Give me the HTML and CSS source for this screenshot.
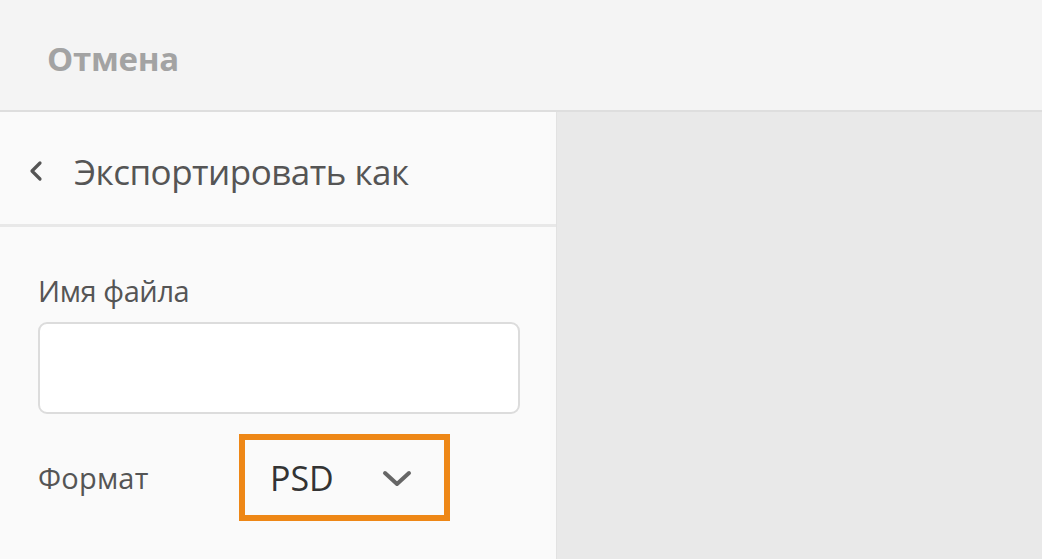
FILE: index.html
```html
<!DOCTYPE html>
<html lang="ru">
<head>
<meta charset="utf-8">
<link rel="stylesheet" href="styles.css">
</head>
<body>
<header class="topbar">
  <span class="cancel">Отмена</span>
</header>
<main class="main">
  <section class="panel">
    <div class="panel-head">
      <svg class="back" width="16" height="22" viewBox="0 0 16 22"><path d="M12 3 L4 11 L12 19" fill="none" stroke="#555" stroke-width="3.2" stroke-linecap="round" stroke-linejoin="round"/></svg>
      <span class="title">Экспортировать как</span>
    </div>
    <div class="panel-body">
      <label class="label">Имя файла</label>
      <div class="input"></div>
      <div class="format-row">
        <span class="label fmt">Формат</span>
        <div class="select">
          <span class="select-value">PSD</span>
          <svg class="chev" width="30" height="18" viewBox="0 0 30 18"><path d="M3 3 L15 14 L27 3" fill="none" stroke="#666" stroke-width="4" stroke-linecap="round" stroke-linejoin="round"/></svg>
        </div>
      </div>
    </div>
  </section>
  <section class="canvas"></section>
</main>
</body>
</html>
```

FILE: styles.css
```css
* { box-sizing: border-box; }
html, body { margin: 0; padding: 0; }
body {
  width: 1042px;
  height: 559px;
  overflow: hidden;
  font-family: "Open Sans", "Noto Sans", sans-serif;
  background: #f4f4f4;
  display: flex;
  flex-direction: column;
}
.topbar {
  height: 112px;
  flex: none;
  background: #f4f4f4;
  border-bottom: 2px solid #dedede;
  display: flex;
  align-items: center;
  padding-left: 47px;
  padding-top: 6px;
}
.cancel {
  font-size: 33px;
  font-weight: 700;
  color: #a3a3a3;
  letter-spacing: -0.3px;
}
.main {
  flex: 1;
  display: flex;
}
.panel {
  width: 557px;
  flex: none;
  background: #fafafa;
  border-right: 1px solid #e2e2e2;
  display: flex;
  flex-direction: column;
}
.panel-head {
  height: 115px;
  border-bottom: 3px solid #e8e8e8;
  display: flex;
  align-items: center;
  padding-left: 28px;
  gap: 30px;
  padding-top: 6px;
}
.title {
  font-size: 35px;
  color: #555;
  letter-spacing: -0.5px;
}
.panel-body {
  padding: 44px 38px 0 38px;
  display: flex;
  flex-direction: column;
}
.label {
  font-size: 29px;
  color: #555;
  letter-spacing: -0.4px;
  line-height: 40px;
}
.label.fmt { letter-spacing: 0.2px; }
.input {
  margin-top: 11px;
  width: 482px;
  height: 92px;
  background: #fff;
  border: 2px solid #dcdcdc;
  border-radius: 9px;
}
.format-row {
  margin-top: 20px;
  display: flex;
  align-items: center;
}
.format-row .label { width: 201px; }
.select {
  width: 211px;
  height: 87px;
  border: 6px solid #ee8716;
  display: flex;
  align-items: center;
  padding-left: 25px;
  gap: 48px;
}
.select-value {
  font-size: 34px;
  color: #333;
  letter-spacing: 0;
}
.chev { margin-top: 2px; }
.canvas {
  flex: 1;
  background: #e9e9e9;
}
```
